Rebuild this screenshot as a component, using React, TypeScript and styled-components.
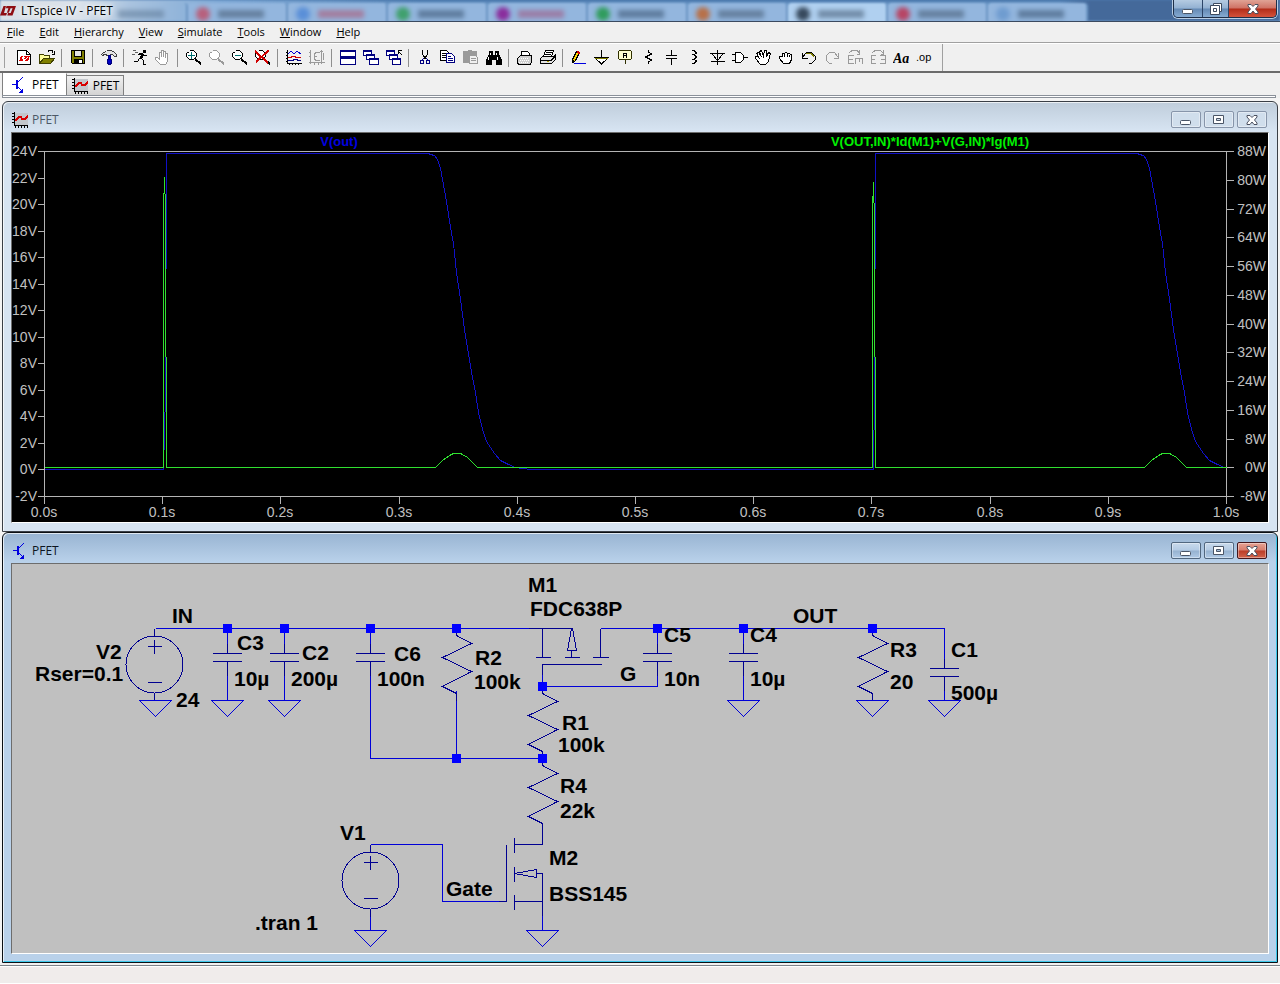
import React, { ReactNode } from "react";
import styled, { createGlobalStyle, css } from "styled-components";

const GlobalStyle = createGlobalStyle`
  * { box-sizing: border-box; }
  body {
    margin: 0;
    background: #f0f0f0;
    color: #000;
    font: 12px/16px "Open Sans", "Noto Sans", sans-serif;
  }
  button {
    font: inherit;
    color: inherit;
    margin: 0;
    padding: 0;
    border: 0;
    background: none;
  }
  svg { display: block; }
`;

const UI_FONT = `12px/16px "Open Sans", "Noto Sans", sans-serif`;

/* ---------- application frame ---------- */

const AppFrame = styled.div`
  display: flex;
  flex-direction: column;
  min-height: 100vh;
  font: ${UI_FONT};
  font-size: 11px;
`;

const TitleBar = styled.header`
  position: relative;
  display: flex;
  align-items: flex-start;
  justify-content: space-between;
  height: 22px;
  padding-right: 3px;
  overflow: hidden;
  border-bottom: 1px solid #3b4a60;
  background: linear-gradient(#4b79ad 0, #6f9ccb 5px, #7ba6d3 100%);
`;

const GlassTabs = styled.div`
  position: absolute;
  inset: 0;
  display: flex;
  padding-left: 88px;
  background: linear-gradient(90deg, #d9dfe6 0, #dbe2ea 80px, #a9c3df 130px, #7fa9d6 220px, transparent 420px, transparent 1060px, #44699a 1090px);
  filter: blur(1px);
`;

const GlassTab = styled.div<{ $lit?: boolean }>`
  display: flex;
  align-items: center;
  gap: 8px;
  flex: 0 0 100px;
  height: 19px;
  margin-top: 3px;
  padding: 3px 8px 0;
  border-right: 2px solid #6c96c4;
  border-radius: 4px 4px 0 0;
  background: ${(p) => (p.$lit ? "#b0d0f0" : "#93b6de")};
  &:first-child { background: none; }
`;

const GlassDot = styled.span<{ $color: string }>`
  width: 14px;
  height: 14px;
  border-radius: 7px;
  background: ${(p) => p.$color};
  filter: blur(2px);
`;

const GlassSmudge = styled.span<{ $color: string }>`
  width: 46px;
  height: 8px;
  background: ${(p) => p.$color};
  opacity: 0.55;
  filter: blur(2px);
`;

const AppName = styled.h1`
  position: relative;
  display: flex;
  align-items: center;
  gap: 5px;
  margin: 0;
  height: 21px;
  font: ${UI_FONT};
  text-shadow: 0 0 4px #fff, 0 0 6px #fff;
`;

const CaptionButtons = styled.div`
  position: relative;
  display: flex;
  height: 18px;
  border: 1px solid #1f2f48;
  border-top: 0;
  border-radius: 0 0 5px 5px;
  overflow: hidden;
  box-shadow: 0 0 0 1px #b8cde4;
`;

const CaptionButton = styled.button<{ $close?: boolean; $wide?: boolean }>`
  display: grid;
  place-items: center;
  width: ${(p) => (p.$close ? "47px" : p.$wide ? "29px" : "26px")};
  border-right: ${(p) => (p.$close ? "0" : "1px solid #2c4568")};
  background: ${(p) =>
    p.$close
      ? "linear-gradient(#e0a395 0, #cf7264 8px, #b32d19 9px, #d4523b 100%)"
      : "linear-gradient(#b5cbe2 0, #93b1d2 8px, #6489b4 9px, #86abd2 100%)"};
`;

const MenuBar = styled.nav`
  display: flex;
  align-items: center;
  height: 21px;
  border-bottom: 1px solid #a0a0a0;
  background: #f0f0f0;
`;

const MenuItem = styled.button`
  padding: 0 8px 0 7px;
  &::first-letter { text-decoration: underline; }
`;

const ToolBar = styled.div`
  display: flex;
  align-items: center;
  height: 30px;
  padding-left: 4px;
  border-top: 1px solid #fff;
  border-bottom: 2px solid #6b6b6b;
`;

const Grip = styled.span`
  width: 8px;
  align-self: stretch;
  margin: 3px 0;
  background: linear-gradient(90deg, #a0a0a0 1px, transparent 1px);
`;

const ToolGroup = styled.div<{ $last?: boolean }>`
  display: flex;
  align-items: center;
  ${(p) =>
    p.$last
      ? css`
          align-self: stretch;
          padding-right: 7px;
          border-right: 1px solid #a0a0a0;
        `
      : css`
          &::after {
            content: "";
            width: 1px;
            height: 18px;
            margin: 0 4px 0 3px;
            background: #8f8f8f;
          }
        `}
`;

const ToolButton = styled.button`
  display: grid;
  place-items: center;
  width: 23px;
  height: 22px;
  padding-left: 1px;
`;

const TabStrip = styled.div`
  display: flex;
  align-items: flex-end;
  height: 22px;
  margin: 0 2px;
  border-left: 1px solid #808080;
`;

const DocTab = styled.button<{ $active?: boolean }>`
  display: flex;
  align-items: center;
  gap: 5px;
  height: ${(p) => (p.$active ? "22px" : "20px")};
  padding: ${(p) => (p.$active ? "0 7px 0 8px" : "0 4px 0 5px")};
  border-right: 1px solid #808080;
  border-top: 1px solid ${(p) => (p.$active ? "#fff" : "#808080")};
  background: ${(p) => (p.$active ? "#fff" : "linear-gradient(#f0f0f0, #d4d4d4)")};
  font: ${UI_FONT};
`;

const TabPage = styled.div`
  height: 3px;
  margin: 0 4px 0 2px;
  border: 1px solid #8a9099;
  background: #fff;
`;

const Workspace = styled.main`
  display: flex;
  flex-direction: column;
  flex: 1;
  padding: 3px 2px 0;
  background: #f4f4f4;
`;

/* ---------- child windows ---------- */

const ChildWindow = styled.section<{ $active?: boolean }>`
  display: flex;
  flex-direction: column;
  padding: 0 8px 8px;
  border: 1px solid ${(p) => (p.$active ? "#0b0f14" : "#3a3f46")};
  border-radius: 6px 6px 0 0;
  background: ${(p) =>
    p.$active
      ? "linear-gradient(#98b4d2 0, #b9d1ea 29px, #b9d1ea 100%)"
      : "linear-gradient(#bfcddb 0, #d7e4f2 29px, #d7e4f2 100%)"};
  box-shadow: inset 1px 1px #ffffffb0 ${(p) => (p.$active ? ", inset -1px -1px #3cc8ea" : "")};
`;

const ChildTitle = styled.div<{ $active?: boolean }>`
  display: flex;
  align-items: center;
  justify-content: space-between;
  height: 30px;
  padding: 5px 2px 0 1px;
  color: ${(p) => (p.$active ? "#0c1420" : "#4c5866")};
`;

const ChildName = styled.h2`
  display: flex;
  align-items: center;
  gap: 4px;
  margin: 0;
  font: ${UI_FONT};
`;

const ChildButtons = styled.div`
  display: flex;
  gap: 3px;
`;

const ChildButton = styled.button<{ $look: "idle" | "blue" | "red" }>`
  display: grid;
  place-items: center;
  width: 30px;
  height: 17px;
  border-radius: 2px;
  border: 1px solid
    ${(p) => ({ idle: "#8795aa", blue: "#51677f", red: "#43161c" })[p.$look]};
  box-shadow: inset 0 0 0 1px #ffffff60;
  background: ${(p) =>
    ({
      idle: "#d0deec",
      blue: "linear-gradient(#c9daec 0, #b4cbe4 7px, #96b2d0 8px, #b0cae6 100%)",
      red: "linear-gradient(#e6a395 0, #d87d6d 7px, #bb3e29 8px, #d2634b 100%)",
    })[p.$look]};
`;

const Sunken = styled.div<{ $tone: string }>`
  border: 1px solid #6d6d6d;
  border-right-color: #fff;
  border-bottom-color: #fff;
  background: ${(p) => p.$tone};
`;

const Canvas = styled.svg`
  width: 100%;
  height: auto;
`;

const StatusBar = styled.footer`
  height: 19px;
  margin-top: 2px;
  border-top: 1px solid #7d8288;
  box-shadow: inset 0 1px #fff, inset 0 -1px #fff;
  background: #f0eceb;
`;

/* ---------- icons ---------- */

const Glyph = ({ children, size = 16 }: { children: ReactNode; size?: number }) => (
  <svg width={size} height={size} viewBox="0 0 16 16" fill="none" stroke="#000" shapeRendering="crispEdges" aria-hidden>
    {children}
  </svg>
);

const LtLogo = () => (
  <svg width={16} height={12} viewBox="0 0 16 12" aria-hidden>
    <path fill="#8f0d12" d="M3.500 1h2.500l-2 7h3l-.8 2.500H0zM6.500 1H16l-3.500 9.500H7.300L8 8h2.700l1.900-4.700h-2l-1.800 4.500H6.900l1.500-4.500H5.900z" />
  </svg>
);

const TransistorIcon = () => (
  <Glyph>
    <path stroke="#0000e0" d="M1 7.500h4M6.500 5.500l5-5M6.500 9.500l4 4" />
    <path stroke="#0000e0" strokeWidth="2" d="M6 3v9" />
    <path fill="#0000e0" stroke="none" d="M12 16H8v-1l3-3h1z" />
  </Glyph>
);

const WaveIcon = () => (
  <Glyph>
    <path fill="#c3c7cc" stroke="none" d="M3 1h13v12H3z" />
    <path d="M2.500 0v14M2 13.500h14M0 1.500h2M0 4.500h2M0 7.500h2M0 10.500h2M3.500 14v2M6.500 14v2M9.500 14v2M12.500 14v2M15.500 14v2" />
    <path stroke="#d80000" strokeWidth="2" d="M3 9l4-4h2l1 2h3l3-3" />
  </Glyph>
);

const MinMark = () => (
  <svg width={12} height={10} viewBox="0 0 12 10" aria-hidden>
    <rect x="0.500" y="5.500" width="10" height="4" rx="1" fill="#fff" stroke="#4a5566" />
  </svg>
);
const MaxMark = () => (
  <svg width={12} height={10} viewBox="0 0 12 10" aria-hidden>
    <path fill="#fff" stroke="#4a5566" fillRule="evenodd" d="M.5.5h10v8H.5zM3.500 3.500h4v2h-4z" />
  </svg>
);
const RestoreMark = () => (
  <svg width={12} height={12} viewBox="0 0 12 12" aria-hidden>
    <path fill="#fff" stroke="#3d4a5e" d="M3.500.5h8v8h-8z" />
    <path fill="#fff" stroke="#3d4a5e" fillRule="evenodd" d="M.5 2.500h9v9h-9zM3.500 5.500h3v3h-3z" />
  </svg>
);
const CloseMark = () => (
  <svg width={12} height={10} viewBox="0 0 12 10" aria-hidden>
    <path fill="#fff" stroke="#4a4f5e" d="M1 .5h3L6 2.500 8 .5h3v1.500L8.500 5 11 8v1.500H8L6 7 4 9.500H1V8l2.500-3L1 2z" />
  </svg>
);

const lens = (color: string) => (
  <>
    <path stroke={color} fill="#fff" d="M3.500 1.500L4.500.5H7.500L10.500 3.500V6.500L7.500 9.500H3.500L.5 6.500V3.500Z" />
    <path stroke={color} strokeWidth="2" d="M9 9l6 5" />
  </>
);

const NAVY = "#000080";
const GRAY = "#9a9a9a";

const miniWindow = (x: number, y: number, w = 9, h = 6) => (
  <g key={`${x}-${y}`}>
    <path fill="#fff" stroke={NAVY} d={`M${x + 0.5} ${y + 0.5}h${w}v${h}h-${w}z`} />
    <path stroke={NAVY} strokeWidth="2" d={`M${x} ${y + 1}h${w}`} />
  </g>
);

const hand = (color: string) => (
  <path
    stroke={color}
    fill="#fff"
    d="M5.500 14.500L.5 9.500V7.500H2.500L4.500 9.500V2.500H6.500V7V.500H8.500V7V1.500H10.500V7.500V3.500H12.500V11.500L10.500 14.500Z"
  />
);

type Tool = { label: string; art: ReactNode };

const TOOL_GROUPS: Tool[][] = [
  [
    {
      label: "New schematic",
      art: (
        <>
          <path fill="#fff" d="M1.500.5h9l4 4v10h-13z" />
          <path d="M10.500.5v4h4" />
          <path fill="#e00000" stroke="none" d="M5 6h2l-1 3h1v2H3zM8 6h6l-2 5H9l1-2h1l1-2h-1l-1 2H8l1-2H7z" />
        </>
      ),
    },
    {
      label: "Open",
      art: (
        <>
          <path fill="#ffff9c" stroke="#404000" d="M.5 13.500v-9h4l1 1h5v3" />
          <path fill="#808000" stroke="#404000" d="M.5 13.500l4-5h11l-4 5z" />
          <path d="M9 1.500l1-1h3l1 2M15.500 1v3h-3" />
        </>
      ),
    },
  ],
  [
    {
      label: "Save",
      art: (
        <>
          <path fill="#808000" d="M1.500.5h13v13h-12l-1-1z" />
          <path fill="#e4e4e4" d="M4.500.5h7v6h-7z" />
          <path fill="#000" d="M4.500 9.500h8v4h-8z" />
          <path fill="#fff" stroke="none" d="M9 10h3v3H9z" />
        </>
      ),
    },
  ],
  [
    {
      label: "Control panel",
      art: (
        <>
          <path fill="#e4e4e4" stroke="#404040" d="M.5 4.500l2-2l3-1l1-1h4l3 2l2 2v2h-2l-2-2h-2v1h-4v-1h-2l-2 1z" />
          <path fill="#0000c8" stroke={NAVY} d="M7.500 5.500h2v4h-2zM6.500 9.500h4v3l-1 2h-2l-1-2z" />
        </>
      ),
    },
  ],
  [
    {
      label: "Run",
      art: (
        <>
          <path fill="#000" stroke="none" d="M11 0h3v3h-3zM7 3h4v1h1v1l-2 4H7l2-4H7z" />
          <path d="M5.500 5.500l2-2M11 5.500h4M9.500 8.500l2 2v4h2M7.500 8.500l-2 3h-4" />
          <path stroke="#606060" d="M1 .5h3M3 2.500h3M0 4.500h3" />
        </>
      ),
    },
    { label: "Halt", art: hand(GRAY) },
  ],
  [
    { label: "Zoom in", art: <>{lens("#000")}<path stroke="#007070" d="M2 5.500h7M5.500 2v7" /></> },
    { label: "Pan", art: lens(GRAY) },
    { label: "Zoom back", art: <>{lens("#000")}<path stroke="#007070" d="M3 5.500h6" /></> },
    { label: "Zoom full extents", art: <>{lens("#000")}<path stroke="#d00000" strokeWidth="2" d="M0 1l13 12M14 0L1 12" /></> },
  ],
  [
    {
      label: "Autorange",
      art: (
        <>
          <path d="M1.500 0v14M1 13.500h15M0 2.500h2M0 5.500h2M0 8.500h2M0 11.500h2M3.500 14v1M6.500 14v1M9.500 14v1M12.500 14v1" />
          <path stroke="#0000d0" d="M2 4l3-3l3 3l3-3l4 3" />
          <path stroke="#d00000" d="M2 7.500h3l1-1h3l1 1h5" />
          <path stroke={NAVY} d="M2 10.500h5l1-1h3l1 1h3" />
        </>
      ),
    },
    {
      label: "Toggle grid",
      art: (
        <path stroke={GRAY} d="M1.500 0v14M0 12.500h16M0 2.500h2M0 6.500h2M5.500 13v2M9.500 13v2M12.500 0v14M11 1.500h3M5 4.500l2-2h4M5 4.500v4l2 2h4M5 6.500h3M14 3l1 3l-1 4" />
      ),
    },
  ],
  [
    {
      label: "Tile windows",
      art: <>{miniWindow(0, 0, 15, 6)}{miniWindow(0, 7, 15, 7)}</>,
    },
    {
      label: "Cascade windows",
      art: <>{miniWindow(0, 0, 8, 5)}{miniWindow(3, 4, 8, 5)}{miniWindow(6, 8, 9, 6)}</>,
    },
    {
      label: "Close all windows",
      art: (
        <>
          {miniWindow(0, 0, 8, 5)}
          {miniWindow(3, 4, 8, 5)}
          {miniWindow(6, 8, 8, 6)}
          <path d="M12.500 4V.500H16M12 1l4 4" />
        </>
      ),
    },
  ],
  [
    {
      label: "Cut",
      art: (
        <>
          <path d="M5.500 0v4l3 5M10.500 0v4l-3 5" />
          <path stroke={NAVY} d="M7 8l-2 2M9 8l2 2M3.500 10.500h3v3h-3zM9.500 10.500h3v3h-3z" />
        </>
      ),
    },
    {
      label: "Copy",
      art: (
        <>
          <path fill="#fff" d="M.5.5h6l3 3v7h-9z" />
          <path d="M2 3.500h4M2 5.500h5M2 7.500h5" />
          <path fill="#fff" stroke={NAVY} d="M6.500 3.500h5l3 3v6h-8z" />
          <path stroke={NAVY} d="M8 6.500h3M8 8.500h5M8 10.500h5" />
        </>
      ),
    },
    {
      label: "Paste",
      art: (
        <>
          <path fill={GRAY} stroke={GRAY} d="M.5 1.500h4l1-1h3l1 1h4v11h-13z" />
          <path fill="#f0f0f0" stroke={GRAY} d="M6.500 5.500h6l2 2v6h-8z" />
          <path stroke={GRAY} d="M8 8.500h5M8 10.500h5" />
        </>
      ),
    },
    {
      label: "Find",
      art: (
        <>
          <path fill="#000" stroke="none" d="M3 1h4v4h2V1h4v3l3 6v5h-6v-5H6v5H0v-5l3-6z" />
          <path stroke="#fff" d="M4.500 3v2M2.500 7v3M10.500 3v2M11.500 7v3" />
        </>
      ),
    },
  ],
  [
    {
      label: "Print setup",
      art: (
        <>
          <path fill="#fff" d="M4.500 5.500v-4h6l2 2v2" />
          <path fill="#d0d0d0" d="M.5 8.500l3-3h11v6l-1 3h-12l-1-2z" />
          <path stroke="#fff" strokeDasharray="1 1" d="M2 8.500h10M3 10.500h10M2 12.500h10" />
        </>
      ),
    },
    {
      label: "Print",
      art: (
        <>
          <path fill="#fff" d="M3.500 6.500l2-6h8l-2 6" />
          <path d="M6 2.500h6M5 4.500h6" />
          <path fill="#e4e4e4" d="M.5 8.500l2-2h11l2-2v5l-4 4h-11z" />
          <path d="M1 10.500h10l4-4" />
          <path stroke="#b0a000" d="M7 11.500h2" />
        </>
      ),
    },
  ],
  [
    {
      label: "Draw wire",
      art: (
        <>
          <path fill="#ffd800" d="M1.500 9.500l4-8l3 1l-4 8l-3 2z" />
          <path stroke="#d00000" strokeWidth="2" d="M6 2l3 1" />
          <path strokeWidth="2" d="M2 10v3" />
          <path stroke="#0000e0" d="M3 13.500h12" />
        </>
      ),
    },
    {
      label: "Ground",
      art: (
        <>
          <path fill="#fff" d="M1.500 8.500L7.500 14L13.500 8.500Z" />
          <path stroke="#808000" d="M1 8.500h13" />
          <path d="M7.500 0v7M0 7.500h15" />
        </>
      ),
    },
    {
      label: "Label net",
      art: (
        <>
          <path fill="#ffffd0" stroke="#303000" d="M1.500 1.500l1-1h11l1 1v7l-1 1h-11l-1-1zM8.500 10v4" />
          <path d="M6.500 8V4l1-1h1l1 1v4M6 5.500h4" />
        </>
      ),
    },
    { label: "Resistor", art: <path d="M8.500 0v2l3 2l-6 3l6 3l-3 2v2" /> },
    { label: "Capacitor", art: <path d="M8.500 0v6M8.500 9v6M3 5.500h11M3 8.500h11" /> },
    { label: "Inductor", art: <path d="M6 .5h2l2 2v1l-2 1h-2h2l2 2v1l-2 2h-2h2l2 1v1l-2 2h-2" /> },
    { label: "Diode", art: <path fill="none" d="M8.500 0v15M1 3.500h15M3.500 4l5 7l5-7M2 11.500h14" /> },
    { label: "Component", art: <path fill="#fff" d="M0 4.500h3M0 10.500h3M3.500 2.500h5l3 3v4l-3 3h-5zM12 7.500h4" /> },
    {
      label: "Move",
      art: (
        <path
          fill="#fff"
          d="M5.500 14.500L.5 8.500V6.500H2.500L4.500 8.500L1.500 3.500L3.500 2.500L6.500 7L4.500 1.500L6.500.5L8.500 6L9.500.5H11.500V6.500L13.500 2.500L15.500 3.500L13.500 11.500L10.500 14.500Z"
        />
      ),
    },
    {
      label: "Drag",
      art: (
        <path
          fill="#fff"
          d="M5.500 13.500L1.500 8.500V6.500H4.500V3.500H6.500L7.500 2.500H8.500L9.500 3.500H11.500L12.500 4.500H13.500V9.500L11.500 13.500Z M6.500 4V7M9.500 4V7M11.500 5V7"
        />
      ),
    },
    {
      label: "Undo",
      art: (
        <>
          <path stroke="#808000" d="M5 3.500h5l3 3" />
          <path fill="none" d="M1.500 3v5h5M2 7l3-4l2-1h3l4 4v4l-3 3H8" />
        </>
      ),
    },
    { label: "Redo", art: <path stroke={GRAY} d="M14.500 3v5h-5M14 7l-3-4l-2-1H6L2 6v4l3 3h3" /> },
    {
      label: "Rotate",
      art: <path stroke={GRAY} d="M7 5.500H1.500v8H7M2 9.500h4M2 3l3-2.500h5l2 2M12.500 0v4h-3M8 8.500h8M8.500 9v5M12 9v3M15.500 9v5" />,
    },
    {
      label: "Mirror",
      art: <path stroke={GRAY} d="M6 5.500H1.500v8H6M2 9.500h3M10 5.500h5.500v8H10M11 9.500h4M2 3l3-2.500h5l3 2M13.500 0v4h-3" />,
    },
    {
      label: "Text",
      art: (
        <text x="0" y="13" fill="#000" stroke="none" fontFamily="Liberation Serif, serif" fontStyle="italic" fontWeight="700" fontSize="14">
          Aa
        </text>
      ),
    },
    {
      label: "SPICE directive",
      art: (
        <text x="0" y="11" fill="#000" stroke="none" fontFamily="Liberation Sans, sans-serif" fontSize="11">
          .op
        </text>
      ),
    },
  ],
];

/* ---------- waveform plot ---------- */

const PLOT = { left: 32, right: 1214, top: 18, bottom: 363 };
const AXIS = "#b4b4b4";

const range = (count: number) => Array.from({ length: count }, (_, i) => i);
const timeX = (i: number) => Math.round(PLOT.left + ((PLOT.right - PLOT.left) * i) / 10);
const voltY = (volts: number) => Math.round(PLOT.top + ((24 - volts) * (PLOT.bottom - PLOT.top)) / 26);
const wattY = (watts: number) => Math.round(PLOT.top + ((88 - watts) * (PLOT.bottom - PLOT.top)) / 96);

const PERIOD = 709;
type Point = [number, number];

const FALL: Point[] = [
  [416, 20], [418, 21], [422, 22], [425, 26], [428, 35], [432, 57], [435, 74], [438, 94], [441, 110],
  [444, 139], [448, 166], [452, 196], [456, 220], [459, 239], [463, 259], [466, 279], [470, 296],
  [474, 308], [478, 314], [482, 320], [488, 327], [496, 331], [503, 334],
];
const BUMP: Point[] = [
  [423, 334], [430, 327], [437, 322], [441, 320], [448, 320], [455, 324], [461, 330], [465, 334],
];
const shift = (points: Point[], dx: number): Point[] => points.map(([x, y]) => [x + dx, y]);
const toPath = (points: Point[]) => points.map(([x, y]) => `${x},${y}`).join(" ");

const VOUT: Point[] = [
  [32, 336], [151, 336], [153, 260], [154, 20], ...FALL, [510, 335], [518, 336],
  [861, 336], [862, 260], [863, 20], ...shift(FALL, PERIOD), [1214, 334],
];
const POWER: Point[] = [
  [32, 334], [151, 334], [151, 76], [152, 44], [153, 76], [153, 223], [154, 224], [154, 334], ...BUMP,
  [860, 334], [860, 76], [861, 49], [862, 90], [862, 223], [863, 224], [863, 334],
  ...shift(BUMP, PERIOD), [1214, 334],
];

const PlotText = styled.text<{ $color?: string }>`
  font: ${(p) => (p.$color ? "700 13px" : "14px")} "Liberation Sans", Arial, sans-serif;
  fill: ${(p) => p.$color ?? "#c0c0c0"};
`;

const Waveforms = () => (
  <Canvas viewBox="0 0 1256 389" role="img" aria-label="Output voltage and MOSFET dissipation over time">
    <g fill="none" stroke={AXIS} shapeRendering="crispEdges" transform="translate(.5 .5)">
      <path d={`M${PLOT.left} ${PLOT.top}V${PLOT.bottom}M${PLOT.right} ${PLOT.top}V${PLOT.bottom}`} />
      <path d={`M${PLOT.left} ${PLOT.top}H${PLOT.right}M${PLOT.left} ${PLOT.bottom}H${PLOT.right}`} />
      {range(14).map((i) => (
        <path key={i} d={`M${PLOT.left - 7} ${voltY(24 - 2 * i)}h7`} />
      ))}
      {range(13).map((i) => (
        <path key={i} d={`M${PLOT.right} ${wattY(88 - 8 * i)}h7`} />
      ))}
      {range(11).map((i) => (
        <path key={i} d={`M${timeX(i)} ${PLOT.bottom}v7`} />
      ))}
      <polyline stroke="#1010c8" points={toPath(VOUT)} />
      <polyline stroke="#30e030" points={toPath(POWER)} />
    </g>
    {range(14).map((i) => (
      <PlotText key={i} x={PLOT.left - 7} y={voltY(24 - 2 * i) + 5} textAnchor="end">
        {24 - 2 * i}V
      </PlotText>
    ))}
    {range(13).map((i) => (
      <PlotText key={i} x={PLOT.right + 40} y={wattY(88 - 8 * i) + 5} textAnchor="end">
        {88 - 8 * i}W
      </PlotText>
    ))}
    {range(11).map((i) => (
      <PlotText key={i} x={timeX(i)} y={PLOT.bottom + 21} textAnchor="middle">
        {(i / 10).toFixed(1)}s
      </PlotText>
    ))}
    <PlotText $color="#0000e0" x={327} y={13} textAnchor="middle">V(out)</PlotText>
    <PlotText $color="#00f000" x={918} y={13} textAnchor="middle">V(OUT,IN)*Id(M1)+V(G,IN)*Ig(M1)</PlotText>
  </Canvas>
);

/* ---------- schematic ---------- */

const WIRE = "#0000d8";
const SYMBOL = "#000090";

const SheetText = styled.text`
  font: 700 21px "Liberation Sans", Arial, sans-serif;
  fill: #000;
`;

const Ground = ({ x, y }: { x: number; y: number }) => (
  <path stroke={WIRE} d={`M${x - 16} ${y}h32l-16 16z`} />
);
const Capacitor = ({ x, y, to }: { x: number; y: number; to: number }) => (
  <>
    <path stroke={WIRE} d={`M${x} 628V${y - 10}M${x} ${y + 22}V${to}`} />
    <path stroke={SYMBOL} d={`M${x} ${y - 10}v10M${x - 15} ${y}h29M${x - 15} ${y + 8}h29M${x} ${y + 8}v14`} />
  </>
);
const Resistor = ({ x, y }: { x: number; y: number }) => (
  <path stroke={SYMBOL} d={`M${x} ${y}v7l15 8l-29 14l29 14l-29 15l14 7v7`} />
);
const Source = ({ x, y }: { x: number; y: number }) => (
  <>
    <circle stroke={SYMBOL} cx={x} cy={y} r="28.500" />
    <path stroke={SYMBOL} d={`M${x} ${y - 36}v8M${x} ${y + 28}v8M${x - 7} ${y - 18}h14M${x} ${y - 25}v14M${x - 7} ${y + 18}h14`} />
  </>
);

const NODES: Point[] = [
  [227, 628], [284, 628], [370, 628], [456, 628], [657, 628], [743, 628], [872, 628],
  [542, 686], [456, 758], [542, 758],
];

const LABELS: [number, number, string][] = [
  [172, 622, "IN"], [96, 658, "V2"], [35, 680, "Rser=0.1"], [176, 706, "24"],
  [237, 649, "C3"], [234, 685, "10µ"], [302, 659, "C2"], [291, 685, "200µ"],
  [394, 660, "C6"], [377, 685, "100n"], [475, 664, "R2"], [474, 688, "100k"],
  [528, 591, "M1"], [530, 615, "FDC638P"], [664, 641, "C5"], [664, 685, "10n"],
  [620, 680, "G"], [750, 641, "C4"], [750, 685, "10µ"], [793, 622, "OUT"],
  [890, 656, "R3"], [890, 688, "20"], [951, 656, "C1"], [951, 699, "500µ"],
  [562, 729, "R1"], [558, 751, "100k"], [560, 792, "R4"], [560, 817, "22k"],
  [340, 839, "V1"], [549, 864, "M2"], [549, 900, "BSS145"], [446, 895, "Gate"],
  [255, 929, ".tran 1"],
];

const Schematic = () => (
  <Canvas viewBox="12 564 1256 389" role="img" aria-label="P-channel MOSFET switch schematic">
    <g fill="none" shapeRendering="crispEdges" transform="translate(.5 .5)">
      <path stroke={WIRE} d="M155 628H542M600 628H944M370 758H542M456 690V758M542 686H657M370 844H442V901H500M542 686v-12" />
      <path stroke={SYMBOL} d="M528 628H571M542 628V657M535 657h15M571 650V657M564 657h15M571 628l-4 22h9l-4-22M600 628V657M592 657h16M542 674V664H601" />
      <Capacitor x={227} y={653} to={700} />
      <Capacitor x={284} y={653} to={700} />
      <Capacitor x={370} y={653} to={758} />
      <Capacitor x={657} y={653} to={686} />
      <Capacitor x={743} y={653} to={700} />
      <Capacitor x={944} y={668} to={700} />
      <Resistor x={456} y={628} />
      <Resistor x={872} y={628} />
      <Resistor x={542} y={686} />
      <Resistor x={542} y={758} />
      <Source x={154} y={664} />
      <Source x={370} y={880} />
      <path stroke={SYMBOL} d="M542 830V844H514M514 837v15M514 866v15M514 894v15M506 844V901H498M514 873l22-4v8l-22-4M536 873H542V915M514 901H542" />
      <path stroke={WIRE} d="M542 915V930M370 916V930" />
      <Ground x={155} y={700} />
      <Ground x={227} y={700} />
      <Ground x={284} y={700} />
      <Ground x={743} y={700} />
      <Ground x={872} y={700} />
      <Ground x={944} y={700} />
      <Ground x={370} y={930} />
      <Ground x={542} y={930} />
      {NODES.map(([x, y]) => (
        <rect key={`${x}-${y}`} x={x - 4.5} y={y - 4.5} width="9" height="9" fill="#0000ff" />
      ))}
    </g>
    {LABELS.map(([x, y, text]) => (
      <SheetText key={`${x}-${y}`} x={x} y={y + 1}>
        {text}
      </SheetText>
    ))}
  </Canvas>
);

/* ---------- page ---------- */

const GLASS_TABS: { dot: string; ink: string; lit?: boolean }[] = [
  { dot: "#d0dbe6", ink: "#5c7896" },
  { dot: "#b8607c", ink: "#40566f" },
  { dot: "#5a8fd8", ink: "#b0506c" },
  { dot: "#3fa06c", ink: "#344e6b" },
  { dot: "#8a2c9c", ink: "#a0507a" },
  { dot: "#2f9c5c", ink: "#344e6b" },
  { dot: "#b87048", ink: "#40566f" },
  { dot: "#36485c", ink: "#40566f", lit: true },
  { dot: "#b84464", ink: "#40566f" },
  { dot: "#6f9cd0", ink: "#344e6b" },
];

const MENUS = ["File", "Edit", "Hierarchy", "View", "Simulate", "Tools", "Window", "Help"];

const WindowButtons = ({ active }: { active?: boolean }) => (
  <ChildButtons>
    <ChildButton $look={active ? "blue" : "idle"} aria-label="Minimize"><MinMark /></ChildButton>
    <ChildButton $look={active ? "blue" : "idle"} aria-label="Maximize"><MaxMark /></ChildButton>
    <ChildButton $look={active ? "red" : "idle"} aria-label="Close"><CloseMark /></ChildButton>
  </ChildButtons>
);

export default function App() {
  return (
    <AppFrame>
      <GlobalStyle />
      <TitleBar>
        <GlassTabs aria-hidden>
          {GLASS_TABS.map((tab, i) => (
            <GlassTab key={i} $lit={tab.lit}>
              <GlassDot $color={tab.dot} />
              <GlassSmudge $color={tab.ink} />
            </GlassTab>
          ))}
        </GlassTabs>
        <AppName><LtLogo />LTspice IV - PFET</AppName>
        <CaptionButtons>
          <CaptionButton $wide aria-label="Minimize"><MinMark /></CaptionButton>
          <CaptionButton aria-label="Restore"><RestoreMark /></CaptionButton>
          <CaptionButton $close aria-label="Close"><CloseMark /></CaptionButton>
        </CaptionButtons>
      </TitleBar>

      <MenuBar aria-label="Main menu">
        {MENUS.map((name) => (
          <MenuItem key={name}>{name}</MenuItem>
        ))}
      </MenuBar>

      <ToolBar role="toolbar" aria-label="Tools">
        <Grip />
        {TOOL_GROUPS.map((group, i) => (
          <ToolGroup key={i} $last={i === TOOL_GROUPS.length - 1}>
            {group.map((tool) => (
              <ToolButton key={tool.label} aria-label={tool.label}>
                <Glyph>{tool.art}</Glyph>
              </ToolButton>
            ))}
          </ToolGroup>
        ))}
      </ToolBar>

      <TabStrip role="tablist">
        <DocTab $active role="tab" aria-selected="true"><TransistorIcon />PFET</DocTab>
        <DocTab role="tab" aria-selected="false"><WaveIcon />PFET</DocTab>
      </TabStrip>
      <TabPage />

      <Workspace>
        <ChildWindow>
          <ChildTitle>
            <ChildName><WaveIcon />PFET</ChildName>
            <WindowButtons />
          </ChildTitle>
          <Sunken $tone="#000">
            <Waveforms />
          </Sunken>
        </ChildWindow>
        <ChildWindow $active>
          <ChildTitle $active>
            <ChildName><TransistorIcon />PFET</ChildName>
            <WindowButtons active />
          </ChildTitle>
          <Sunken $tone="#c0c0c0">
            <Schematic />
          </Sunken>
        </ChildWindow>
      </Workspace>
      <StatusBar />
    </AppFrame>
  );
}
